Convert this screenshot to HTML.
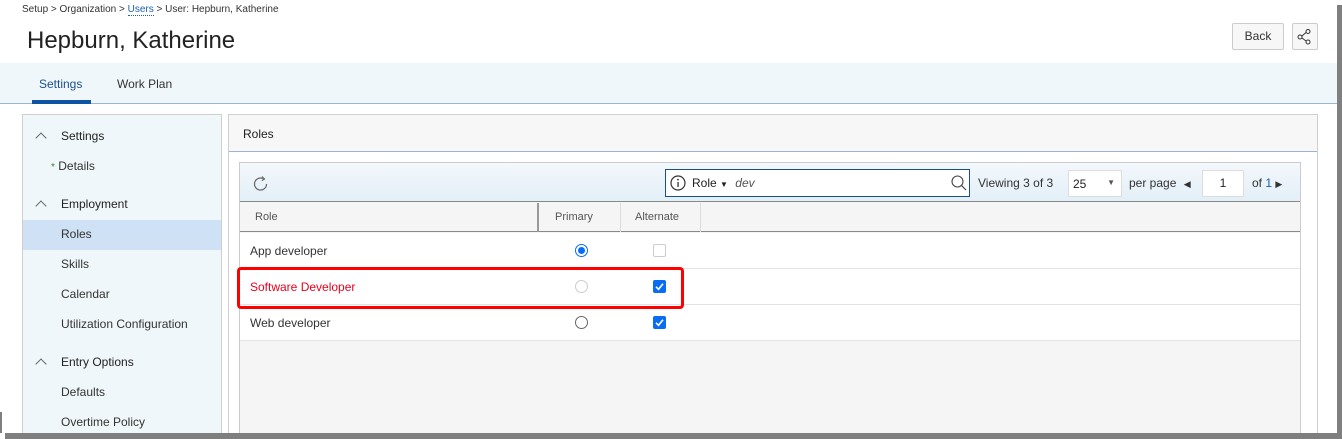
<!DOCTYPE html>
<html><head><style>
*{box-sizing:border-box;margin:0;padding:0}
body{width:1342px;height:439px;overflow:hidden;background:#fff;font-family:"Liberation Sans",sans-serif;position:relative;color:#222}
.a{position:absolute}
.sb div{position:absolute;left:0;width:198px;font-size:12px;color:#333}
.chev{display:inline-block;width:8px;height:8px;border-left:1.3px solid #666;border-top:1.3px solid #666;transform:rotate(45deg);margin:0 16px 0 14px;position:relative;top:2px}
.row{position:absolute;left:0;width:1060px;height:36px;border-bottom:1px solid #e3e3e3;background:#fff;font-size:12px}
.row span{position:absolute;left:10px;top:11px}
.rad{position:absolute;left:335px;top:11px;width:13px;height:13px;border-radius:50%;border:1px solid #666;background:#fff}
.cb{position:absolute;left:413px;top:11px;width:13px;height:13px;border-radius:2px;background:#0a6cf5}
</style></head><body>
<div class="a" style="left:22px;top:4px;font-size:10px;color:#333">Setup &gt; Organization &gt; <span style="color:#1a5fb4;border-bottom:1px dotted #1a5fb4">Users</span> &gt; User: Hepburn, Katherine</div>
<div class="a" style="left:27px;top:27px;font-size:24px;color:#222">Hepburn, Katherine</div>
<div class="a" style="left:1232px;top:23px;width:52px;height:27px;border:1px solid #ccc;border-radius:2px;background:#f7f7f7;font-size:12px;text-align:center;line-height:25px;color:#333">Back</div>
<div class="a" style="left:1292px;top:23px;width:26px;height:27px;border:1px solid #ccc;border-radius:2px;background:#f7f7f7">
<svg width="24" height="25" viewBox="0 0 24 25"><g fill="none" stroke="#333" stroke-width="1"><circle cx="7" cy="13" r="2"/><circle cx="15" cy="7.5" r="2"/><circle cx="15" cy="18" r="2"/><path d="M9 12 L13 8.5 M9 14 L13 17"/></g></svg></div>
<div class="a" style="left:0;top:63px;width:1337px;height:41px;background:#f0f7fb;border-bottom:1px solid #9db4cf"></div>
<div class="a" style="left:39px;top:77px;font-size:12px;color:#1b4f8a">Settings</div>
<div class="a" style="left:32px;top:100px;width:59px;height:4px;background:#0d55a3"></div>
<div class="a" style="left:117px;top:77px;font-size:12px;color:#333">Work Plan</div>
<div class="a sb" style="left:22px;top:114px;width:200px;height:325px;background:#f0f7fb;border:1px solid #cfcfcf">
<div style="top:14px;font-size:12px;color:#222"><span class="chev"></span>Settings</div>
<div style="top:44px;left:28px;"><span style="color:#2e8b2e;font-size:10px">*</span> Details</div>
<div style="top:82px;color:#222"><span class="chev"></span>Employment</div>
<div style="top:105px;height:30px;background:#cfe2f5"></div>
<div style="top:112px;left:38px">Roles</div>
<div style="top:142px;left:38px">Skills</div>
<div style="top:172px;left:38px">Calendar</div>
<div style="top:202px;left:38px">Utilization Configuration</div>
<div style="top:240px;color:#222"><span class="chev"></span>Entry Options</div>
<div style="top:270px;left:38px">Defaults</div>
<div style="top:300px;left:38px">Overtime Policy</div>
</div>
<div class="a" style="left:228px;top:114px;width:1090px;height:325px;background:#fff;border:1px solid #cfcfcf"></div>
<div class="a" style="left:229px;top:115px;width:1088px;height:37px;background:#f7f7f7;border-bottom:1px solid #9db4cf"></div>
<div class="a" style="left:243px;top:127px;font-size:12px;color:#222">Roles</div>
<div class="a" style="left:239px;top:162px;width:1062px;height:277px;background:#f5f5f5;border:1px solid #ccc"></div>
<div class="a" style="left:240px;top:163px;width:1060px;height:39px;background:linear-gradient(#f3f8fc,#e3eff8);border-bottom:1px solid #888"></div>
<svg class="a" style="left:252px;top:175px" width="18" height="18" viewBox="0 0 18 18"><path d="M14.5 9 A6 6 0 1 1 11 3.6" fill="none" stroke="#666" stroke-width="1.2"/><path d="M10 1.5 L12.5 4 L9.8 5.6" fill="none" stroke="#666" stroke-width="1.2"/></svg>
<div class="a" style="left:665px;top:169px;width:305px;height:28px;background:#fff;border:1px solid #1b4f8a"></div>
<svg class="a" style="left:670px;top:175px" width="16" height="16" viewBox="0 0 16 16"><circle cx="8" cy="8" r="7" fill="none" stroke="#333" stroke-width="1.2"/><rect x="7.4" y="7" width="1.3" height="5" fill="#333"/><circle cx="8" cy="4.6" r="0.9" fill="#333"/></svg>
<div class="a" style="left:692px;top:176px;font-size:12px;color:#222">Role <span style="font-size:8px">▼</span> <i style="color:#555;margin-left:4px">dev</i></div>
<svg class="a" style="left:950px;top:174px" width="18" height="18" viewBox="0 0 18 18"><circle cx="7.5" cy="7.5" r="5.5" fill="none" stroke="#444" stroke-width="1.1"/><path d="M11.5 11.5 L16 16" stroke="#444" stroke-width="1.2"/></svg>
<div class="a" style="left:978px;top:176px;font-size:12px;color:#333">Viewing 3 of 3</div>
<div class="a" style="left:1068px;top:170px;width:54px;height:27px;background:#fff;border:1px solid #ddd;font-size:12px;padding:6px 4px">25<span style="position:absolute;right:6px;top:7px;font-size:8px;color:#555">▼</span></div>
<div class="a" style="left:1129px;top:176px;font-size:12px;color:#333">per page <span style="font-size:9px;margin-left:4px">◀</span></div>
<div class="a" style="left:1202px;top:170px;width:42px;height:27px;background:#fff;border:1px solid #ddd;font-size:12px;text-align:center;line-height:25px">1</div>
<div class="a" style="left:1252px;top:176px;font-size:12px;color:#333">of <span style="color:#1a5fb4">1</span> <span style="font-size:9px">▶</span></div>
<div class="a" style="left:240px;top:203px;width:1060px;height:29px;background:#f5f5f5;border-bottom:1px solid #888;font-size:11px;color:#555">
<span class="a" style="left:15px;top:8px">Role</span>
<span class="a" style="left:297px;top:0;width:2px;height:29px;background:#999"></span>
<span class="a" style="left:315px;top:8px">Primary</span>
<span class="a" style="left:380px;top:0;width:1px;height:29px;background:#ddd"></span>
<span class="a" style="left:395px;top:8px">Alternate</span>
<span class="a" style="left:460px;top:0;width:1px;height:29px;background:#ddd"></span>
</div>
<div class="a" style="left:240px;top:233px">
<div class="row" style="top:0"><span style="color:#333">App developer</span><div class="rad" style="border:1.5px solid #0a6cf5"><div style="margin:2px;width:7px;height:7px;border-radius:50%;background:#0a6cf5"></div></div><div class="cb" style="background:#fff;border:1px solid #ccc"></div></div>
<div class="row" style="top:36px"><span style="color:#e8001c">Software Developer</span><div class="rad" style="border-color:#ccc"></div><div class="cb"><svg width="13" height="13"><path d="M3 6.8 L5.5 9.3 L10 3.8" fill="none" stroke="#fff" stroke-width="1.6"/></svg></div></div>
<div class="row" style="top:72px"><span style="color:#333">Web developer</span><div class="rad"></div><div class="cb"><svg width="13" height="13"><path d="M3 6.8 L5.5 9.3 L10 3.8" fill="none" stroke="#fff" stroke-width="1.6"/></svg></div></div>
</div>
<div class="a" style="left:237px;top:267px;width:447px;height:42px;border:3px solid #f00;border-radius:4px"></div>
<div class="a" style="left:1337px;top:5px;width:5px;height:434px;background:#7f7f7f"></div>
<div class="a" style="left:5px;top:433px;width:1337px;height:6px;background:#7f7f7f"></div>
<div class="a" style="left:0;top:412px;width:2px;height:21px;background:#7f7f7f"></div>
</body></html>
